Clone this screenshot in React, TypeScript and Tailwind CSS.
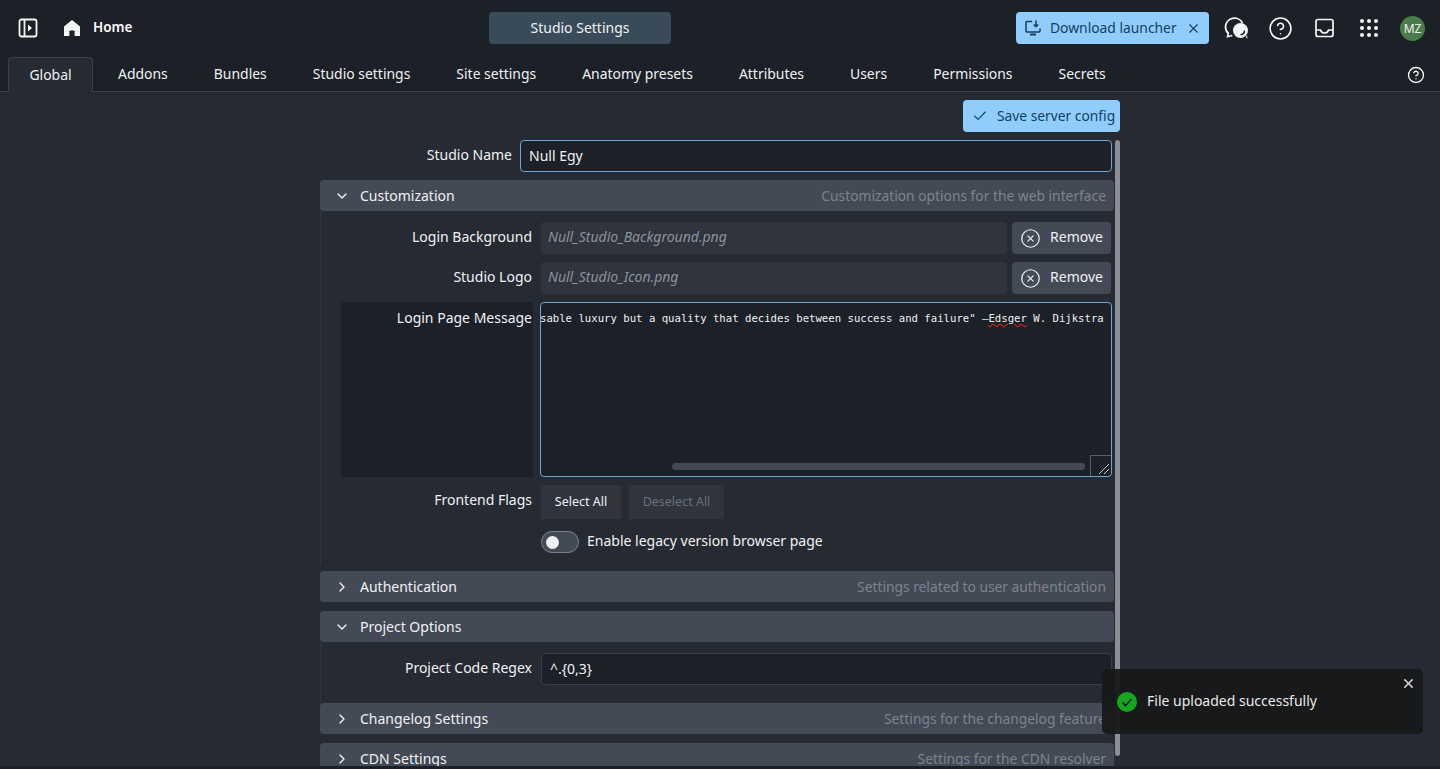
import React from "react";
import { Check, ChevronDown, ChevronRight, CircleHelp, CircleX, X } from "lucide-react";

const tabs = ["Global", "Addons", "Bundles", "Studio settings", "Site settings", "Anatomy presets", "Attributes", "Users", "Permissions", "Secrets"];

function Section({ title, hint, open }: { title: string; hint: string; open?: boolean }) {
  return (
    <div className="flex h-[31px] shrink-0 items-center rounded-[4px] bg-[#434a56] pl-[14px] pr-2 text-[#f0f1f3]">
      {open ? <ChevronDown size={16} strokeWidth={2} /> : <ChevronRight size={16} strokeWidth={2} />}
      <span className="ml-[10px]">{title}</span>
      <span className="ml-auto whitespace-nowrap text-[13.800px] text-[#7d838d]">{hint}</span>
    </div>
  );
}

function Label({ children }: { children: React.ReactNode }) {
  return <div className="w-[212px] shrink-0 pr-[1px] text-right text-[#f0f1f3]">{children}</div>;
}

function FileRow({ label, file }: { label: string; file: string }) {
  return (
    <div className="flex h-8 items-center">
      <Label><span className="block pb-[3px]">{label}</span></Label>
      <div className="ml-2 flex h-8 w-[466px] items-center rounded-[4px] bg-[#2f343d] px-[7px] pb-[3px] italic text-[#8d929b]">{file}</div>
      <button className="ml-[5px] flex h-8 w-[99px] items-center justify-center gap-[9px] rounded-[4px] bg-[#434a56] text-[#f0f1f3]">
        <CircleX size={21} strokeWidth={1.4} />
        <span className="pb-[3px]">Remove</span>
      </button>
    </div>
  );
}

export default function App() {
  return (
    <div className="relative flex h-[769px] flex-col overflow-hidden bg-[#1c2027] text-[14px] leading-[19px] font-['Noto_Sans','Open_Sans',sans-serif]">
      <header className="flex h-14 shrink-0 items-center pl-[18px] text-white">
        <div className="flex w-[471px] shrink-0 items-center">
          <svg width="20" height="20" viewBox="0 0 20 20" fill="none" stroke="#f5f6f7" strokeWidth="1.8">
            <rect x="1.500" y="1.500" width="17" height="17" rx="2" />
            <path d="M6.500 1.500v17" />
            <path d="M10 6.500l4 3.500-4 3.500z" fill="#f5f6f7" stroke="none" />
          </svg>
          <svg className="ml-[24px]" width="20" height="20" viewBox="0 0 20 20" fill="#f5f6f7">
            <path d="M10 2l8 6.600V18h-5.400v-5.600H7.400V18H2V8.600z" />
          </svg>
          <span className="ml-[11px] pb-[2px] text-[13.500px] font-semibold">Home</span>
        </div>
        <div className="flex h-8 w-[182px] shrink-0 items-center justify-center rounded-[4px] bg-[#394a58] pb-[2px] text-[#f0f1f3]">Studio Settings</div>
        <button className="ml-[345px] flex h-8 w-[193px] shrink-0 items-center rounded-[4px] bg-[#90cdfd] pl-2 text-[#13405f]">
          <svg width="18" height="18" viewBox="0 0 18 18" fill="none" stroke="#13405f" strokeWidth="1.5">
            <path d="M8 2.500H3a1 1 0 0 0-1 1V12a1 1 0 0 0 1 1h12a1 1 0 0 0 1-1V9.500" />
            <path d="M12 1.500V7.500M9.800 5.500L12 7.700l2.200-2.200" />
            <path d="M6 15.500h6" strokeWidth="2" />
          </svg>
          <span className="ml-[8px] whitespace-nowrap pb-[2px] text-[13.850px]">Download launcher</span>
          <X className="ml-auto mr-[8px]" size={15} strokeWidth={1.8} />
        </button>
        <svg className="ml-[14px] shrink-0" width="26" height="26" viewBox="0 0 26 26" fill="none">
          <path d="M5.500 18.500C3.500 16.800 2.500 14.500 2.500 12a9 9 0 0 1 17-4" stroke="#f5f6f7" strokeWidth="1.800" />
          <path d="M5.500 18l-1 3.800 4.800-1.300" stroke="#f5f6f7" strokeWidth="1.500" />
          <circle cx="17.500" cy="15.500" r="7.500" fill="#f5f6f7" />
          <path d="M23 22.500l1.500 1.300-.5-4z" fill="#f5f6f7" />
          <path d="M21.500 15.500a4.500 4.500 0 0 1-4 4.300" stroke="#1c2027" strokeWidth="1.500" />
        </svg>
        <CircleHelp className="ml-[19px] shrink-0" size={25} strokeWidth={1.5} color="#f5f6f7" />
        <svg className="ml-[21px] shrink-0" width="22" height="22" viewBox="0 0 22 22" fill="none" stroke="#f5f6f7" strokeWidth="1.7">
          <rect x="2" y="2.500" width="17" height="17" rx="2" />
          <path d="M2 13h4.500c.5 2 2.200 3 4 3s3.500-1 4-3H19" />
        </svg>
        <svg className="ml-[23px] shrink-0" width="20" height="20" viewBox="0 0 20 20" fill="#f5f6f7">
          <circle cx="3" cy="3" r="2" /><circle cx="10" cy="3" r="2" /><circle cx="17" cy="3" r="2" />
          <circle cx="3" cy="10" r="2" /><circle cx="10" cy="10" r="2" /><circle cx="17" cy="10" r="2" />
          <circle cx="3" cy="17" r="2" /><circle cx="10" cy="17" r="2" /><circle cx="17" cy="17" r="2" />
        </svg>
        <div className="ml-[21px] flex h-[25px] w-[25px] shrink-0 items-center justify-center rounded-full bg-[#4b7c48] text-[12px] text-[#f0f1f3]">MZ</div>
      </header>

      <nav className="flex h-[36px] shrink-0 items-end border-b border-[#3a3f48] pl-2 pr-[15px] text-[13.950px] text-[#f0f1f3]">
        {tabs.map((t, i) => (
          <div
            key={t}
            className={
              i === 0
                ? "-mb-px mr-[2px] flex h-[35px] w-[85px] items-center justify-center rounded-t-[4px] border border-b-0 border-[#3a3f48] bg-[#262a32] pb-[2px]"
                : "flex h-[35px] items-center justify-center px-[23px] pb-[1px] whitespace-nowrap"
            }
          >
            {t}
          </div>
        ))}
        <CircleHelp className="mb-[7px] ml-auto" size={18} strokeWidth={1.8} color="#f5f6f7" />
      </nav>

      <main className="mb-[3px] flex min-h-0 flex-1 justify-center overflow-hidden bg-[#262a32]">
        <div className="w-[800px] shrink-0">
          <div className="flex justify-end pt-2">
            <button className="flex h-8 w-[157px] items-center rounded-[4px] bg-[#90cdfd] pb-px pl-2 text-[#13405f]">
              <Check className="ml-[1px]" size={16} strokeWidth={1.6} />
              <span className="ml-[9px] whitespace-nowrap text-[13.800px]">Save server config</span>
            </button>
          </div>

          <div className="mt-2 flex">
            <div className="flex w-[794px] shrink-0 flex-col">
              <div className="flex h-8 items-center">
                <div className="w-[192px] pb-[3px] text-right text-[#f0f1f3]">Studio Name</div>
                <div className="ml-2 flex h-8 w-[592px] items-center rounded-[4px] border border-[#6ba5d2] bg-[#1c2027] px-2 pb-[2px] text-[#f0f1f3]">Null Egy</div>
              </div>

              <div className="mt-2"><Section title="Customization" hint="Customization options for the web interface" open /></div>

              <div className="flex h-[354px] flex-col gap-2 border-l border-dotted border-[#3a3f48] pt-[11px]">
                <FileRow label="Login Background" file="Null_Studio_Background.png" />
                <FileRow label="Studio Logo" file="Null_Studio_Icon.png" />

                <div className="ml-5 flex h-[175px]">
                  <div className="w-[192px] shrink-0 rounded-l-[4px] bg-[#1c2027] pr-[1px] pt-[6px] text-right text-[#f0f1f3]">Login Page Message</div>
                  <div className="relative ml-[7px] w-[572px] overflow-hidden rounded-[4px] border border-[#6ba5d2] bg-[#1c2027]">
                    <div className="-ml-px whitespace-nowrap pt-[9px] font-['DejaVu_Sans_Mono',monospace] text-[10.650px] leading-[14px] text-[#f0f1f3]">
                      sable luxury but a quality that decides between success and failure" –<span className="underline decoration-[#e02020] decoration-wavy">Edsger</span> W. Dijkstra
                    </div>
                    <div className="absolute bottom-[6px] left-[131px] h-[7px] w-[413px] rounded-full bg-[#434a56]" />
                    <div className="absolute bottom-0 right-0 h-[21px] w-[21px] border-l border-t border-[#5a6069]">
                      <svg width="20" height="20" viewBox="0 0 20 20" stroke="#c9ccd1" strokeWidth="1"><path d="M8 18L18 8M13 18l5-5" /></svg>
                    </div>
                  </div>
                </div>

                <div className="flex h-[34px] items-start">
                  <Label><span className="block pt-[5px]">Frontend Flags</span></Label>
                  <button className="ml-2 flex h-[34px] w-[80px] items-center justify-center bg-[#2f343d] pb-[2px] text-[12.500px] text-[#f0f1f3]">Select All</button>
                  <button className="ml-2 flex h-[34px] w-[95px] items-center justify-center bg-[#2f343d] pb-[2px] text-[12.500px] text-[#6a707a]">Deselect All</button>
                </div>

                <div className="mt-[4px] flex h-[22px] items-center pl-[220px]">
                  <div className="flex h-[22px] w-[38px] items-center rounded-full border border-[#7d838d] bg-[#434a56] pl-[4px]">
                    <div className="h-[13px] w-[13px] rounded-full bg-[#f0f1f3]" />
                  </div>
                  <span className="ml-2 pb-[3px] text-[#f0f1f3]">Enable legacy version browser page</span>
                </div>
              </div>

              <div className="mt-[6px]"><Section title="Authentication" hint="Settings related to user authentication" /></div>
              <div className="mt-[9px]"><Section title="Project Options" hint="" open /></div>
              <div className="flex h-[61px] items-start border-l border-dotted border-[#3a3f48] pt-[11px]">
                <Label><span className="block pt-[5px]">Project Code Regex</span></Label>
                <div className="ml-2 flex h-8 w-[571px] items-center rounded-[4px] border border-[#3a3f48] bg-[#1c2027] px-2 pb-[2px] text-[#f0f1f3]">^.{"{0,3}"}</div>
              </div>
              <Section title="Changelog Settings" hint="Settings for the changelog feature" />
              <div className="mt-[9px]"><Section title="CDN Settings" hint="Settings for the CDN resolver" /></div>
            </div>
            <div className="ml-[1px] h-[616px] w-[5px] shrink-0 rounded-full bg-[#8b8e94]" />
          </div>
        </div>
      </main>

      <div className="absolute left-[1102px] top-[669px] flex h-[65px] w-[321px] items-center rounded-[5px] bg-[#171819]/95 pl-[14px] text-[#e8e9ea]">
        <svg width="22" height="22" viewBox="0 0 22 22">
          <circle cx="11" cy="11" r="10" fill="#14a81f" />
          <path d="M6.500 11.500l3 3 6-6.500" fill="none" stroke="#10202a" strokeWidth="1.700" />
        </svg>
        <span className="ml-[9px] -translate-y-px">File uploaded successfully</span>
        <X className="absolute right-[7px] top-[7px]" size={15} strokeWidth={2.6} color="#d5d6d8" />
      </div>
    </div>
  );
}
